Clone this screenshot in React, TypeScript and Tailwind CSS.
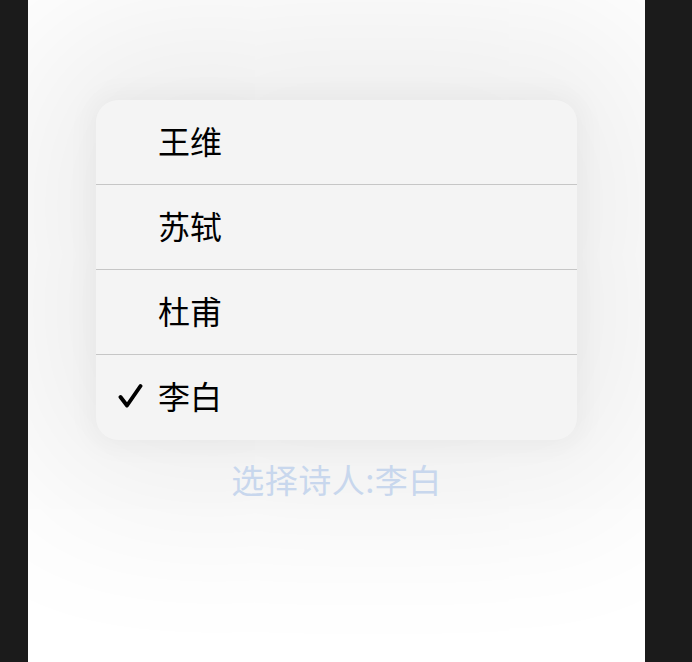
import React from "react";

const poets = ["王维", "苏轼", "杜甫", "李白"];
const selected = "李白";

function Check() {
  return (
    <svg width="26" height="26" viewBox="0 0 26 26" fill="none">
      <path d="M2.5 14 L9 22.5 L22.5 3" stroke="#000" strokeWidth="3.9" strokeLinecap="round" strokeLinejoin="round" />
    </svg>
  );
}

export default function App() {
  return (
    <div className="flex w-[692px] h-[662px] bg-[#1b1b1b]" style={{ fontFamily: '"Noto Sans CJK SC", "Noto Sans", sans-serif' }}>
      <div className="w-[28px] shrink-0" />
      <div className="w-[617px] shrink-0 bg-white overflow-hidden flex flex-col items-center pt-[100px]">
        <div className="w-[481px] rounded-[22px] bg-[#f4f4f4] shadow-[0_0_24px_8px_rgba(0,0,0,0.035),0_-10px_170px_70px_rgba(0,0,0,0.075)] overflow-hidden">
          {poets.map((p, i) => (
            <div key={p} className={`h-[85px] flex items-center pb-[5px] ${i < poets.length - 1 ? "border-b border-[#c6c6c6]" : ""}`}>
              <div className="w-[62px] shrink-0 flex items-center pl-[22px] pt-[2px]">
                {p === selected ? <Check /> : null}
              </div>
              <span className="text-[32px] leading-[44px] text-black">{p}</span>
            </div>
          ))}
        </div>
        <div className="mt-[17px] text-[33px] leading-[44px] tracking-[0.5px] text-[#c8d7ed]">选择诗人:李白</div>
      </div>
    </div>
  );
}
